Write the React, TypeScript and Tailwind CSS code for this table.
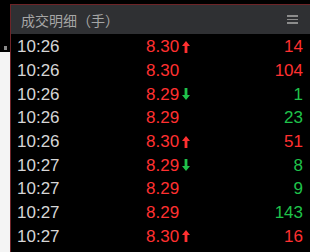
import React from "react";

type Row = { t: string; p: string; dir?: "up" | "down"; v: string; vc: "r" | "g" };

const rows: Row[] = [
  { t: "10:26", p: "8.30", dir: "up", v: "14", vc: "r" },
  { t: "10:26", p: "8.30", v: "104", vc: "r" },
  { t: "10:26", p: "8.29", dir: "down", v: "1", vc: "g" },
  { t: "10:26", p: "8.29", v: "23", vc: "g" },
  { t: "10:26", p: "8.30", dir: "up", v: "51", vc: "r" },
  { t: "10:27", p: "8.29", dir: "down", v: "8", vc: "g" },
  { t: "10:27", p: "8.29", v: "9", vc: "g" },
  { t: "10:27", p: "8.29", v: "143", vc: "g" },
  { t: "10:27", p: "8.30", dir: "up", v: "16", vc: "r" },
];

function Arrow({ dir }: { dir: "up" | "down" }) {
  if (dir === "up") {
    return (
      <svg width="8" height="12" viewBox="0 0 8 12" className="ml-[3px]">
        <polygon points="4,0 8,5 5.4,5 5.4,12 2.6,12 2.6,5 0,5" fill="#ff3030" />
      </svg>
    );
  }
  return (
    <svg width="8" height="12" viewBox="0 0 8 12" className="ml-[3px]">
      <polygon points="4,12 8,7 5.4,7 5.4,0 2.6,0 2.6,7 0,7" fill="#1fc24a" />
    </svg>
  );
}

export default function App() {
  return (
    <div
      className="w-[310px] h-[252px] bg-black flex overflow-hidden"
      style={{ fontFamily: '"Liberation Sans", Arial, "Noto Sans CJK SC", sans-serif' }}
    >
      <div className="w-[10px] h-full flex flex-col">
        <div className="h-[52px] bg-black relative">
          <div className="absolute left-[4px] top-[46px] w-[3px] h-[4px] bg-[#8a8a8a]" />
        </div>
        <div className="flex-1 bg-[#f4f4f4]" />
      </div>
      <div className="flex-1 flex flex-col pt-[4px]">
        <div className="flex-1 flex flex-col border-l border-t border-[#6e2428]">
          <div className="h-[29px] bg-[#2f3033] flex items-center justify-between pl-[10px] pr-[12px]">
            <span
              className="text-[14px] text-[#a6a6a6] leading-none"
              style={{ fontFamily: '"Noto Sans CJK SC", "Liberation Sans", sans-serif' }}
            >
              成交明细（手）
            </span>
            <div className="flex flex-col gap-[2px]">
              <div className="w-[11px] h-[1.5px] bg-[#8c8c8c]" />
              <div className="w-[11px] h-[1.5px] bg-[#8c8c8c]" />
              <div className="w-[11px] h-[1.5px] bg-[#8c8c8c]" />
            </div>
          </div>
          <div className="flex flex-col pt-[1px]">
            {rows.map((r, i) => (
              <div key={i} className="h-[23.7px] flex items-center pl-[6px] pr-[7px] text-[17px] leading-none">
                <span className="w-[129px] text-[#d6d6d6]">{r.t}</span>
                <span className="flex-1 flex items-center text-[#ff3030]">
                  {r.p}
                  {r.dir && <Arrow dir={r.dir} />}
                </span>
                <span className={r.vc === "r" ? "text-[#ff3030]" : "text-[#1fc24a]"}>{r.v}</span>
              </div>
            ))}
          </div>
        </div>
      </div>
    </div>
  );
}
